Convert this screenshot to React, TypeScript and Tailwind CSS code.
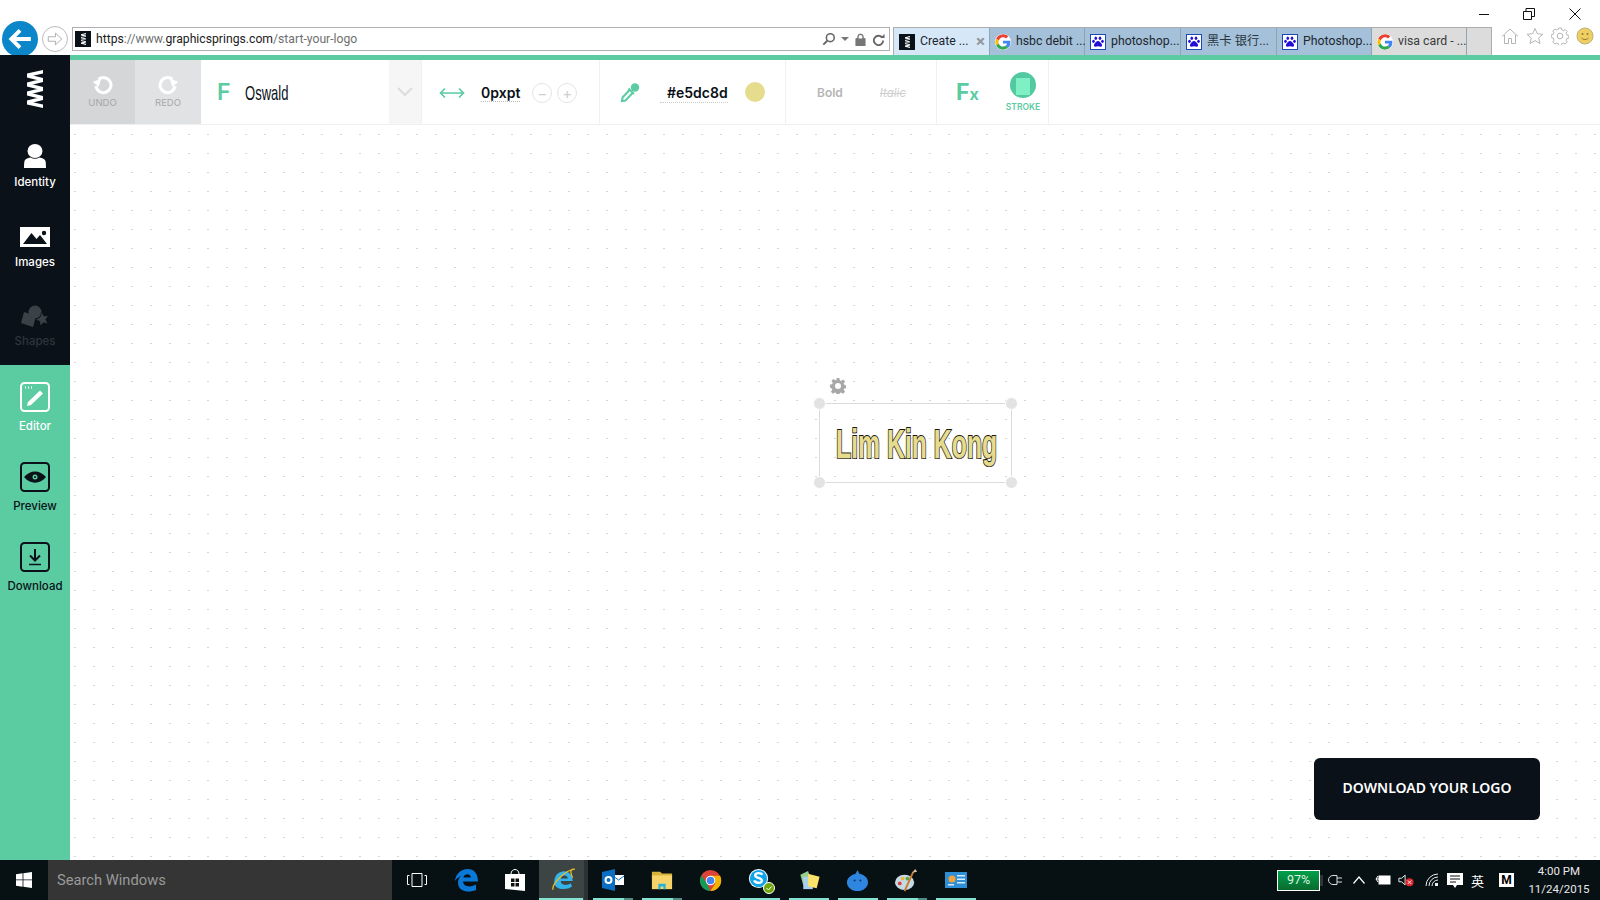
import React from "react";

const SANS = "font-['Roboto','Open_Sans',sans-serif]";
const UI = "font-['Inter','Liberation_Sans',sans-serif]";
const NARROW = "font-['Liberation_Sans','Arial',sans-serif]";

function Logo({ className = "" }: { className?: string }) {
  return (
    <svg viewBox="0 0 16 38" className={className} fill="none" stroke="#fff" strokeWidth="3.300" strokeLinejoin="bevel">
      <path d="M17 1.500-1 5.500 17 10-1 14.500 17 19-1 23.500 17 28-1 32.500 17 36.500" />
    </svg>
  );
}

function Favicon() {
  return (
    <span className="flex h-4 w-4 shrink-0 items-center justify-center bg-[#0a1118]">
      <Logo className="h-3 w-[5px]" />
    </span>
  );
}

function GoogleIcon() {
  return (
    <svg viewBox="0 0 48 48" className="h-4 w-4 shrink-0 rounded-full bg-white">
      <path fill="#EA4335" d="M24 10c3.500 0 6.600 1.200 9.100 3.600l6.800-6.800C35.800 3 30.300 1 24 1 15 1 7.200 6.100 3.400 13.600l7.900 6.100C13.200 14 18.100 10 24 10z" />
      <path fill="#4285F4" d="M46.100 24.500c0-1.600-.1-3.100-.4-4.500H24v8.600h12.400c-.5 2.900-2.100 5.300-4.600 6.900l7.600 5.900c4.500-4.100 6.700-10.200 6.700-16.900z" />
      <path fill="#FBBC05" d="M11.300 28.300C10.800 26.900 10.500 25.500 10.500 24s.3-2.900.8-4.300l-7.900-6.100C1.900 16.700 1 20.200 1 24s.9 7.300 2.400 10.400l7.900-6.100z" />
      <path fill="#34A853" d="M24 47c6.300 0 11.500-2.100 15.400-5.600l-7.600-5.900c-2.100 1.400-4.700 2.300-7.800 2.300-5.900 0-10.800-4-12.700-9.500l-7.900 6.100C7.200 41.900 15 47 24 47z" />
    </svg>
  );
}

function BaiduIcon() {
  return (
    <svg viewBox="0 0 16 16" className="h-4 w-4 shrink-0 bg-white">
      <rect x="0.5" y="0.5" width="15" height="15" fill="#fff" stroke="#1c49b8" />
      <g fill="#2310d8">
        <ellipse cx="5.800" cy="4.300" rx="1.300" ry="1.800" />
        <ellipse cx="10" cy="4.300" rx="1.300" ry="1.800" />
        <ellipse cx="3.500" cy="7.300" rx="1.300" ry="1.600" />
        <ellipse cx="12.500" cy="7.300" rx="1.300" ry="1.600" />
        <path d="M8 7c1.800 0 2.300 1.700 3.500 2.700 1 1 .8 3-1 3-1 0-1.500-.4-2.500-.4s-1.500.4-2.500.4c-1.800 0-2-2-1-3C5.700 8.700 6.200 7 8 7z" />
      </g>
    </svg>
  );
}

function Tab({ icon, title, bg, close, textClass = "text-[#1c2630]", width }: { icon: React.ReactNode; title: string; bg: string; close?: boolean; textClass?: string; width: string }) {
  return (
    <div className={`flex h-full items-center gap-[5px] border-r border-[#8fa3b5] pl-[5px] ${bg} ${width}`}>
      {icon}
      <span className={`whitespace-nowrap text-[12.300px] ${textClass}`}>{title}</span>
      {close && <span className="ml-auto pr-[4px] text-[17px] font-bold leading-none text-[#8f98a0]">×</span>}
    </div>
  );
}

function BrowserChrome() {
  return (
    <header className={`h-[55px] shrink-0 overflow-hidden bg-white ${SANS}`}>
      <div className="flex h-[27px] items-start justify-end pr-[19px] pt-[8px] text-[#111]">
        <svg viewBox="0 0 12 12" className="h-3 w-3"><path d="M1 6.500H11" stroke="currentColor" strokeWidth="1" /></svg>
        <svg viewBox="0 0 12 12" className="ml-[33px] h-3 w-3" fill="none" stroke="currentColor"><path d="M.5 3.500h8v8h-8zM3 3.500V.5h8.500v8H8.500" /></svg>
        <svg viewBox="0 0 12 12" className="ml-[34px] h-3 w-3" fill="none" stroke="currentColor"><path d="M.5 .5 11.500 11.500M11.500 .5 .5 11.500" /></svg>
      </div>
      <div className="flex h-[28px] items-start">
        <div className="-mt-[6px] ml-[2px] flex h-[36px] w-[36px] shrink-0 items-center justify-center rounded-full bg-[#0a86c9]">
          <svg viewBox="0 0 24 24" className="h-[26px] w-[26px]" fill="none" stroke="#fff" strokeWidth="3.600"><path d="M22 12H4M12 4l-8 8 8 8" /></svg>
        </div>
        <div className="-mt-[1px] ml-[4px] flex h-[26px] w-[26px] shrink-0 items-center justify-center rounded-full border border-[#bdbdbd]">
          <svg viewBox="0 0 20 20" className="h-[18px] w-[18px]" fill="none" stroke="#a8a8a8"><path d="M2.500 7.500h8v-4l7 6.500-7 6.500v-4h-8z" /></svg>
        </div>
        <div className="ml-[4px] flex h-[24px] w-[818px] shrink-0 items-center border border-[#b0b0b0] pl-[2px] pr-[4px]">
          <Favicon />
          <span className="ml-[5px] pt-[1px] text-[12.200px] text-[#707070]">
            <span className="text-[#222]">https</span>://www.<span className="text-[#222]">graphicsprings.com</span>/start-your-logo
          </span>
          <div className="ml-auto flex items-center text-[#777]">
            <svg viewBox="0 0 16 16" className="h-[14px] w-[14px]" fill="none" stroke="#666" strokeWidth="1.800"><circle cx="9.500" cy="6.500" r="4.500" /><path d="M6 10 1.500 14.500" strokeWidth="2.200" /></svg>
            <svg viewBox="0 0 8 4" className="ml-[5px] h-1 w-2"><path d="M0 0h8L4 4z" fill="#777" /></svg>
            <svg viewBox="0 0 12 14" className="ml-[6px] h-[13px] w-[11px]"><path d="M1 6h10v8H1zM3 6V4a3 3 0 0 1 6 0v2" fill="#777" stroke="#777" /><path d="M4 6V4a2 2 0 0 1 4 0v2z" fill="#fff" /></svg>
            <svg viewBox="0 0 14 14" className="ml-[6px] h-[13px] w-[13px]" fill="none" stroke="#666" strokeWidth="2"><path d="M11 5a5 5 0 1 0 1 3" /><path d="M9 5.500h4.500V1z" fill="#666" stroke="none" /></svg>
          </div>
        </div>
        <div className="ml-[3px] flex h-[28px] w-[599px] shrink-0 border-l border-t border-[#adadad]">
          <Tab icon={<Favicon />} title="Create ..." bg="bg-[#d6e8f7]" close width="w-[96px]" />
          <Tab icon={<GoogleIcon />} title="hsbc debit ..." bg="bg-[#a4c1d9]" width="w-[95px]" />
          <Tab icon={<BaiduIcon />} title="photoshop..." bg="bg-[#a4c1d9]" width="w-[96px]" />
          <Tab icon={<BaiduIcon />} title="黑卡 银行..." bg="bg-[#a4c1d9]" textClass="text-[#2a3540] font-['Roboto','Noto_Sans_CJK_SC',sans-serif]" width="w-[96px]" />
          <Tab icon={<BaiduIcon />} title="Photoshop..." bg="bg-[#a4c1d9]" width="w-[95px]" />
          <Tab icon={<GoogleIcon />} title="visa card - ..." bg="bg-[#dcdcdc]" textClass="text-[#3a3a3a]" width="w-[95px]" />
          <div className="w-[25px] border-r border-[#adadad] bg-[#dcdcdc]" />
        </div>
        <div className="ml-[9px] flex items-center gap-[7px] text-[#b5b5b5]">
          <svg viewBox="0 0 18 18" className="h-[18px] w-[18px]" fill="none" stroke="currentColor"><path d="M1 9.500 9 2l8 7.500M3.500 8v8.500h4v-5h3v5h4V8" /></svg>
          <svg viewBox="0 0 18 18" className="h-[18px] w-[18px]" fill="none" stroke="currentColor"><path d="M9 1.500 11.300 6.700 17 7.300 12.700 11 14 16.500 9 13.600 4 16.500 5.300 11 1 7.300 6.700 6.700z" /></svg>
          <svg viewBox="0 0 18 18" className="h-[18px] w-[18px]" fill="none" stroke="currentColor"><circle cx="9" cy="9" r="2.800" /><path d="M7.600 1h2.800l.4 2 1.700.7 1.700-1.100 2 2-1.100 1.700.7 1.700 2 .4v2.800l-2 .4-.7 1.700 1.100 1.700-2 2-1.700-1.100-1.700.7-.4 2H7.600l-.4-2-1.700-.7-1.700 1.100-2-2 1.100-1.700L2.200 11l-2-.4V7.800l2-.4.700-1.700-1.100-1.700 2-2 1.700 1.100 1.700-.7z" /></svg>
          <svg viewBox="0 0 18 18" className="h-[18px] w-[18px]"><circle cx="9" cy="9" r="8" fill="#f0cf62" stroke="#bdb07a" /><circle cx="6.500" cy="7" r="1" fill="#8a7a30" /><circle cx="11.500" cy="7" r="1" fill="#8a7a30" /><path d="M5.500 11c2 2 5 2 7 0" fill="none" stroke="#8a7a30" /></svg>
        </div>
      </div>
    </header>
  );
}

function NavItem({ icon, label, labelClass, className }: { icon: React.ReactNode; label: string; labelClass: string; className: string }) {
  return (
    <div className={`flex h-[80px] flex-col items-center ${className}`}>
      {icon}
      <span className={`text-[11.500px] font-medium leading-[14px] ${labelClass}`}>{label}</span>
    </div>
  );
}

function Sidebar() {
  return (
    <aside className={`flex w-[70px] shrink-0 flex-col bg-[#5bcba2] ${UI}`}>
      <div className="h-[310px] shrink-0 bg-[#0a1118]">
        <div className="flex h-[70px] justify-center pt-[15px]">
          <Logo className="h-[38px] w-[16px]" />
        </div>
        <NavItem className="pt-[19px]" labelClass="mt-[7px] text-white" label="Identity" icon={
          <svg viewBox="0 0 22 24" className="h-[24px] w-[22px]" fill="#fff"><ellipse cx="11" cy="7" rx="7.500" ry="7" /><path d="M6.500 13.500c3 1.800 6 1.800 9 0 3 .5 5.500 1.500 6 3.500.4 2 .5 4 .5 7H0c0-3 .1-5 .5-7 .5-2 3-3 6-3.500z" /></svg>
        } />
        <NavItem className="pt-[22px]" labelClass="mt-[8px] text-white" label="Images" icon={
          <svg viewBox="0 0 30 20" className="h-[20px] w-[30px]"><path fill="#fff" d="M0 0h30v20H0z" /><path fill="#0a1118" d="M3 17 11.500 6l5 6 3.500-4 7 9z" /><circle cx="24" cy="6" r="2.200" fill="#0a1118" /></svg>
        } />
        <NavItem className="pt-[20px]" labelClass="mt-[6px] text-[#2d363d]" label="Shapes" icon={
          <svg viewBox="0 0 28 23" className="h-[23px] w-[28px]" fill="#3a4247"><path d="M0 18 3 7l12 4-3 11z" /><circle cx="14" cy="7" r="6.500" /><path d="M21 7l1.800 4 4.700-.4-2.800 3.800 2.300 4.300-4.500-1-3.300 3.300-.4-4.600-4-2 4-2z" stroke="#0a1118" strokeWidth=".6" /></svg>
        } />
      </div>
      <NavItem className="pt-[17px]" labelClass="mt-[7px] text-white" label="Editor" icon={
        <svg viewBox="0 0 30 30" className="h-[30px] w-[30px]" fill="none"><rect x="1" y="1" width="28" height="28" rx="3.500" stroke="#fff" strokeWidth="2" /><path d="M5 5.500h1M8 5.500h1M11 5.500h1" stroke="#fff" strokeWidth="2" /><path d="M7 24l1-4L20 8.500l3 3L11 23z" fill="#fff" /></svg>
      } />
      <NavItem className="pt-[17px]" labelClass="mt-[7px] text-[#0a1118]" label="Preview" icon={
        <svg viewBox="0 0 30 30" className="h-[30px] w-[30px]" fill="none"><rect x="1" y="1" width="28" height="28" rx="3.500" stroke="#0a1118" strokeWidth="2" /><path d="M4 15c6-7.500 16-7.500 22 0-6 7.500-16 7.500-22 0z" fill="#0a1118" /><circle cx="15" cy="15" r="2.500" fill="#5bcba2" /><circle cx="15" cy="15" r="1" fill="#0a1118" /></svg>
      } />
      <NavItem className="pt-[17px]" labelClass="mt-[7px] text-[#0a1118]" label="Download" icon={
        <svg viewBox="0 0 30 30" className="h-[30px] w-[30px]" fill="none" stroke="#0a1118"><rect x="1" y="1" width="28" height="28" rx="3.500" strokeWidth="2" /><path d="M15 7v11M10 13.500l5 5 5-5" strokeWidth="2" /><path d="M9 22.500h12" strokeWidth="1.500" /></svg>
      } />
    </aside>
  );
}

function Toolbar() {
  return (
    <div className={`flex h-[70px] shrink-0 border-b border-[#efefef] border-t-[5px] border-t-[#5bcba2] bg-white ${UI}`}>
      <div className="flex w-[65px] flex-col items-center bg-[#d5d6d8] pt-[13px]">
        <svg viewBox="0 0 22 22" className="h-[22px] w-[22px]" fill="none" stroke="#fff" strokeWidth="3"><path d="M6.500 6.500A7.500 7.500 0 1 1 4 13" /><path d="M1 8l9-1.500L6 14z" transform="rotate(-12 5 10)" fill="#fff" stroke="none" /></svg>
        <span className="mt-[2px] text-[9.500px] leading-[12px] text-[#a6a7a9]">UNDO</span>
      </div>
      <div className="flex w-[66px] flex-col items-center bg-[#e1e2e4] pt-[13px]">
        <svg viewBox="0 0 22 22" className="h-[22px] w-[22px]" fill="none" stroke="#fff" strokeWidth="3"><path d="M15.500 6.500A7.500 7.500 0 1 0 18 13" /><path d="M21 8l-9-1.500L16 14z" transform="rotate(12 17 10)" fill="#fff" stroke="none" /></svg>
        <span className="mt-[2px] text-[9.500px] leading-[12px] text-[#a6a7a9]">REDO</span>
      </div>
      <div className="flex w-[188px] items-center pl-[16px] pt-[1px]">
        <span className="text-[23px] font-semibold leading-none text-[#5bcba2]">F</span>
        <span className={`ml-[14px] origin-left scale-x-[0.62] text-[21px] leading-none text-[#0a1118] ${NARROW}`}>Oswald</span>
      </div>
      <div className="flex w-[32px] items-center justify-center bg-[#f6f6f6]">
        <svg viewBox="0 0 16 10" className="h-[10px] w-[16px]" fill="none" stroke="#dcdcdc" strokeWidth="2"><path d="M1 1l7 7 7-7" /></svg>
      </div>
      <div className="flex w-[179px] items-center border-l border-r border-[#f0f0f0] pl-[17px] pt-[2px]">
        <svg viewBox="0 0 26 12" className="h-[12px] w-[26px]" fill="none" stroke="#5bcba2" strokeWidth="1.700"><path d="M1.500 6h23M6 1.500 1.500 6 6 10.500M20 1.500 24.500 6 20 10.500" /></svg>
        <span className="ml-[16px] border-b border-dotted border-[#bbb] text-[14px] font-semibold leading-[17px] text-[#0a1118]">0pxpt</span>
        <span className="ml-[12px] flex h-[20px] w-[20px] items-center justify-center rounded-full border border-[#e4e4e4] text-[15px] leading-none text-[#cfcfcf]">−</span>
        <span className="ml-[5px] flex h-[20px] w-[20px] items-center justify-center rounded-full border border-[#e4e4e4] text-[15px] leading-none text-[#cfcfcf]">+</span>
      </div>
      <div className="flex w-[186px] items-center border-r border-[#f0f0f0] pl-[20px]">
        <svg viewBox="0 0 20 22" className="h-[22px] w-[20px]" fill="none"><path d="M10 8.500 2.500 16.500 2 20 5.500 19.500 13 11.500" stroke="#5bcba2" strokeWidth="2" /><path d="M8.500 7.500 14 13" stroke="#5bcba2" strokeWidth="2" /><circle cx="15" cy="6.500" r="4.200" fill="#5bcba2" /></svg>
        <span className="ml-[20px] mt-[2px] border-b border-dotted border-[#ccc] pl-[7px] text-[14px] font-semibold leading-[19px] text-[#0a1118]">#e5dc8d</span>
        <span className="ml-[17px] h-[20px] w-[20px] rounded-full bg-[#e5dc8d]" />
      </div>
      <div className="flex w-[151px] items-center border-r border-[#f0f0f0] pt-[2px]">
        <span className="ml-[31px] text-[12px] font-semibold text-[#b5b5b5]">Bold</span>
        <span className="ml-[37px] pt-[1px] text-[11.500px] italic text-[#cfcfcf] line-through">Italic</span>
      </div>
      <div className="flex w-[112px] items-center border-r border-[#f0f0f0]">
        <span className="ml-[19px] text-[23px] font-bold leading-none text-[#5bcba2]">F<span className="text-[16px]">x</span></span>
        <div className="ml-[27px] flex flex-col items-center">
          <span className="flex h-[26px] w-[26px] items-end justify-center rounded-full bg-[#52c9a0]">
            <span className="mb-[3px] h-[17px] w-[14px] bg-[#7ff0c4]" />
          </span>
          <span className="mt-[4px] text-[8.500px] font-semibold leading-[11px] text-[#5bcba2]">STROKE</span>
        </div>
      </div>
    </div>
  );
}

function Handle({ className }: { className: string }) {
  return <span className={`absolute h-[13px] w-[13px] rounded-full border border-white bg-[#e3e3e3] ${className}`} />;
}

function Canvas() {
  return (
    <main className="relative flex-1 bg-[linear-gradient(to_bottom,transparent_1px,white_1px),linear-gradient(to_right,#d5d5d5_2px,transparent_2px)] bg-[length:19px_19px] bg-[position:4px_9px]">
      <svg viewBox="0 0 16 16" className="absolute left-[760px] top-[253px] h-[16px] w-[16px]"><path fill="#a8a8a8" fillRule="evenodd" d="M6.600 0h2.800l.4 2.300 1.300.6 2-1.300 2 2-1.400 1.900.6 1.400 2.300.4v2.800l-2.300.4-.6 1.300 1.400 2-2 2-2-1.400-1.300.6-.4 2.300H6.600l-.4-2.300-1.300-.6-2 1.400-2-2 1.400-2-.6-1.300L-.1 9.400V6.600l2.300-.4.6-1.400-1.400-1.900 2-2 2 1.300 1.300-.6zM8 5a3 3 0 1 0 0 6 3 3 0 0 0 0-6z" /></svg>
      <div className="absolute left-[749px] top-[278px] h-[80px] w-[193px] border border-[#dcdcdc] bg-transparent">
        <Handle className="-left-[7px] -top-[7px]" />
        <Handle className="-right-[7px] -top-[7px]" />
        <Handle className="-bottom-[7px] -left-[7px]" />
        <Handle className="-bottom-[7px] -right-[7px]" />
        <div className={`absolute left-[16px] top-[17px] origin-left scale-x-[0.605] whitespace-nowrap text-[41px] font-bold leading-[46px] text-[#e5dc8d] [paint-order:stroke_fill] [-webkit-text-stroke:2px_#1a1710] [text-shadow:-1px_1px_0_#5f5a4a] ${NARROW}`}>Lim Kin Kong</div>
      </div>
      <button className="absolute bottom-[40px] right-[60px] flex h-[62px] w-[226px] items-center justify-center rounded-[6px] bg-[#0a1118] pb-[3px] text-[14px] font-semibold text-white">DOWNLOAD YOUR LOGO</button>
    </main>
  );
}

function TaskCell({ children, underline, active, split }: { children: React.ReactNode; underline?: boolean; active?: boolean; split?: boolean }) {
  return (
    <div className={`relative flex h-full w-[49px] shrink-0 items-center justify-center ${active ? "bg-[#3c4444]" : ""}`}>
      {children}
      {active && <span className="absolute inset-y-0 right-0 w-[4px] bg-[#2a3232]" />}
      {underline && (
        <span className={`absolute bottom-0 flex h-[2px] bg-[#84e3d3] ${active ? "left-0 w-[44px]" : "left-[5px] w-[40px]"}`}>
          {split && <span className="ml-auto h-full w-[9px] bg-[#4d8f86]" />}
        </span>
      )}
    </div>
  );
}

function Taskbar() {
  return (
    <footer className={`flex h-[40px] shrink-0 items-center bg-[#071114] text-white ${SANS}`}>
      <div className="flex h-full w-[48px] shrink-0 items-center justify-center">
        <svg viewBox="0 0 16 16" className="h-4 w-4" fill="#fff"><path d="M0 2.300 6.600 1.300V7.500H0zM7.400 1.200 16 0V7.500H7.400zM0 8.300H6.600V14.700L0 13.700zM7.400 8.300H16V16L7.400 14.800z" /></svg>
      </div>
      <div className="flex h-full w-[344px] shrink-0 items-center bg-[#353535] pl-[9px] pt-[1px] text-[14.700px] text-[#9a9a9a]">Search Windows</div>
      <TaskCell>
        <svg viewBox="0 0 20 14" className="h-[14px] w-[20px]" fill="none" stroke="#fff"><path d="M5 .5h10v13H5zM2.500 2.500H.5v9h2M17.500 2.500h2v9h-2" /></svg>
      </TaskCell>
      <TaskCell>
        <svg viewBox="0 0 24 24" className="h-[24px] w-[24px]"><path fill="#0a78d7" d="M1 13C1.500 6 7 1 13.500 1 20 1 24 5.500 24 13.500H9c.3 5 7 6.500 13 3v5.500c-7 3-18 2-18-7.500 0-3 1-5 3.500-7C4.500 9 2.500 10.500 1 13zm8.300-3.500h7.500c0-4.500-6.500-4.500-7.500 0z" /></svg>
      </TaskCell>
      <TaskCell>
        <svg viewBox="0 0 22 24" className="h-[24px] w-[22px]"><path d="M7 6c0-6 8-6 8 0" fill="none" stroke="#fff" /><path fill="#fff" d="M1 6h20v17L1 21z" /><path fill="#111" d="M7 10.500h3.500v3.500H7zM11.500 10.500H15V14H11.500zM7 15h3.500v3.500H7zM11.500 15H15v3.500H11.500z" /></svg>
      </TaskCell>
      <TaskCell active underline>
        <svg viewBox="0 0 24 24" className="h-[26px] w-[26px]"><path fill="#34b3ea" d="M3 14C3 7 8 4 12 4s8 3 8 9H9c0 4 6 4.500 9 2l1.500 3C14 22 3 21 3 14zm6-3.500h6.500C15 7 10 7 9 10.500z" /><path d="M2 21C0 17 12 3 22 2c-6-1-3 6-2 8" fill="none" stroke="#e8bd2a" strokeWidth="1.200" /></svg>
      </TaskCell>
      <TaskCell underline split>
        <svg viewBox="0 0 24 24" className="h-[24px] w-[24px]"><path fill="#fff" d="M12 7h11v10H12z" /><path fill="#0a6fc2" d="M1 4 14 1v22L1 20z" /><path fill="none" stroke="#0a6fc2" d="M12 8l5.500 4L23 8" /><circle cx="7.500" cy="12" r="3" fill="none" stroke="#fff" strokeWidth="2" /></svg>
      </TaskCell>
      <TaskCell underline split>
        <svg viewBox="0 0 24 24" className="h-[22px] w-[24px]"><path fill="#d9b23c" d="M1 3h9l2 2h11v4H1z" /><path fill="#f6d469" d="M1 7h22v15H1z" /><path fill="#2ab2d6" d="M8 22v-6h8v6h-2.500v-3h-3v3z" /></svg>
      </TaskCell>
      <TaskCell>
        <svg viewBox="0 0 24 24" className="h-[23px] w-[23px]"><circle cx="12" cy="12" r="11" fill="#db4437" /><path fill="#0f9d58" d="M12 23A11 11 0 0 1 2.500 6.500L8 15l4 8z" /><path fill="#f4b400" d="M12 7h10a11 11 0 0 1-10 16l5-8z" /><circle cx="12" cy="12" r="5" fill="#fff" /><circle cx="12" cy="12" r="4" fill="#4285f4" /></svg>
      </TaskCell>
      <TaskCell underline>
        <div className="relative h-[24px] w-[24px]">
          <svg viewBox="0 0 24 24" className="absolute -left-[1px] -top-[1px] h-[23px] w-[23px]"><circle cx="12" cy="12" r="10" fill="#fff" /><circle cx="12" cy="12" r="9" fill="#10a5e8" /><path d="M16 8c-1-2-7-2.500-7.500 .5C8 12 16 10.500 15.500 14.500c-.5 3-7 2.500-8-.5" fill="none" stroke="#fff" strokeWidth="2.500" /></svg>
          <svg viewBox="0 0 12 12" className="absolute -bottom-[2px] -right-[3px] h-[12px] w-[12px]"><circle cx="6" cy="6" r="5.500" fill="#6ea60c" stroke="#fff" /><path d="M3.500 6l2 2 3-3.500" fill="none" stroke="#fff" /></svg>
        </div>
      </TaskCell>
      <TaskCell underline>
        <svg viewBox="0 0 24 24" className="h-[23px] w-[24px]"><path fill="#96cf8c" d="M3 6l8-4 3 9-8 6z" /><path fill="#a6cff0" d="M6 8h10v13H6z" /><path fill="#fbe26a" d="M11 5l12 3-3 12-9-2z" /></svg>
      </TaskCell>
      <TaskCell underline>
        <svg viewBox="0 0 24 24" className="h-[23px] w-[23px]"><path fill="#2f86e0" d="M12 1l2 4c5 1 9 4 9 9 0 5-5 9-11 9S1 19 1 14c0-5 5-8 9-9z" /><circle cx="9" cy="12" r="1" fill="#0c2f66" /><circle cx="15" cy="12" r="1" fill="#0c2f66" /></svg>
      </TaskCell>
      <TaskCell underline split>
        <svg viewBox="0 0 26 26" className="h-[25px] w-[25px]"><ellipse cx="11" cy="15" rx="10" ry="8" fill="#c6d9e6" /><circle cx="6" cy="16" r="2" fill="#d8443d" /><circle cx="9" cy="11" r="2" fill="#e8b73c" /><circle cx="14" cy="11" r="2" fill="#5aa845" /><path d="M11 24 20 4" stroke="#c97a2c" strokeWidth="2" /><path d="M19 5l3-4 2 3z" fill="#e5c49a" /></svg>
      </TaskCell>
      <TaskCell underline>
        <svg viewBox="0 0 22 16" className="h-[16px] w-[22px]"><path fill="#2e8fd7" d="M0 0h22v16H0z" /><circle cx="7" cy="7" r="3.500" fill="#f2a33c" /><path d="M12 3h8v1.500h-8zM12 6.500h8V8h-8zM12 10h8v1.500h-8zM3 12h6v1.500H3z" fill="#d6ecfb" /></svg>
      </TaskCell>
      <div className="ml-auto flex h-full items-center pr-[10px]">
        <div className="flex h-[21px] w-[43px] items-center justify-center border border-white bg-[linear-gradient(#00a04a,#0a6b2e)] text-[12.500px] text-[#d8f5e0]">97%</div>
        <span className="h-[11px] w-[3px] bg-[#333]" />
        <svg viewBox="0 0 16 12" className="ml-[4px] h-[12px] w-[16px]" fill="none" stroke="#ddd"><path d="M10 1.500H6a4.500 4.500 0 0 0 0 9h4zM10 4h5M10 8h5" /></svg>
        <svg viewBox="0 0 12 8" className="ml-[10px] h-[8px] w-[12px]" fill="none" stroke="#fff" strokeWidth="1.200"><path d="M.5 7.500 6 1l5.500 6.500" /></svg>
        <svg viewBox="0 0 16 12" className="ml-[10px] h-[12px] w-[16px]" fill="none" stroke="#fff"><rect x="4" y="2" width="11" height="8" fill="#fff" /><path d="M4 5H1M3 2 1 5l2 3" /></svg>
        <svg viewBox="0 0 18 14" className="ml-[7px] h-[14px] w-[16px]"><path d="M1 5h3l4-3.500v11L4 9H1z" fill="none" stroke="#fff" /><circle cx="13" cy="9.500" r="4.500" fill="#e0262e" /><path d="M11 7.500l4 4M15 7.500l-4 4" stroke="#fff" /></svg>
        <svg viewBox="0 0 14 14" className="ml-[11px] h-[14px] w-[14px]" fill="none" stroke="#eee"><path d="M1 13a12 12 0 0 1 12-12M4 13a9 9 0 0 1 9-9M7 13a6 6 0 0 1 6-6" /><path d="M10 10h3v3h-3z" fill="#eee" stroke="none" /></svg>
        <svg viewBox="0 0 16 15" className="ml-[8px] h-[15px] w-[16px]"><path fill="#fff" d="M0 0h16v12H10l-2 3-2-3H0z" /><path d="M3 3h10M3 6h10M3 9h6" stroke="#111" /></svg>
        <span className="ml-[8px] text-[13px] leading-none text-white font-['Noto_Sans_CJK_SC',sans-serif]">英</span>
        <span className="ml-[15px] flex h-[14px] w-[15px] items-center justify-center bg-white text-[12px] font-bold leading-none text-black">M</span>
        <div className="ml-[14px] flex w-[62px] flex-col items-center text-[11.500px] leading-[18px] text-[#e8e8e8]">
          <span>4:00 PM</span>
          <span>11/24/2015</span>
        </div>
      </div>
    </footer>
  );
}

export default function App() {
  return (
    <div className="flex h-screen w-full flex-col overflow-hidden bg-white">
      <BrowserChrome />
      <div className="flex min-h-0 flex-1">
        <Sidebar />
        <div className="flex min-w-0 flex-1 flex-col">
          <Toolbar />
          <Canvas />
        </div>
      </div>
      <Taskbar />
    </div>
  );
}
